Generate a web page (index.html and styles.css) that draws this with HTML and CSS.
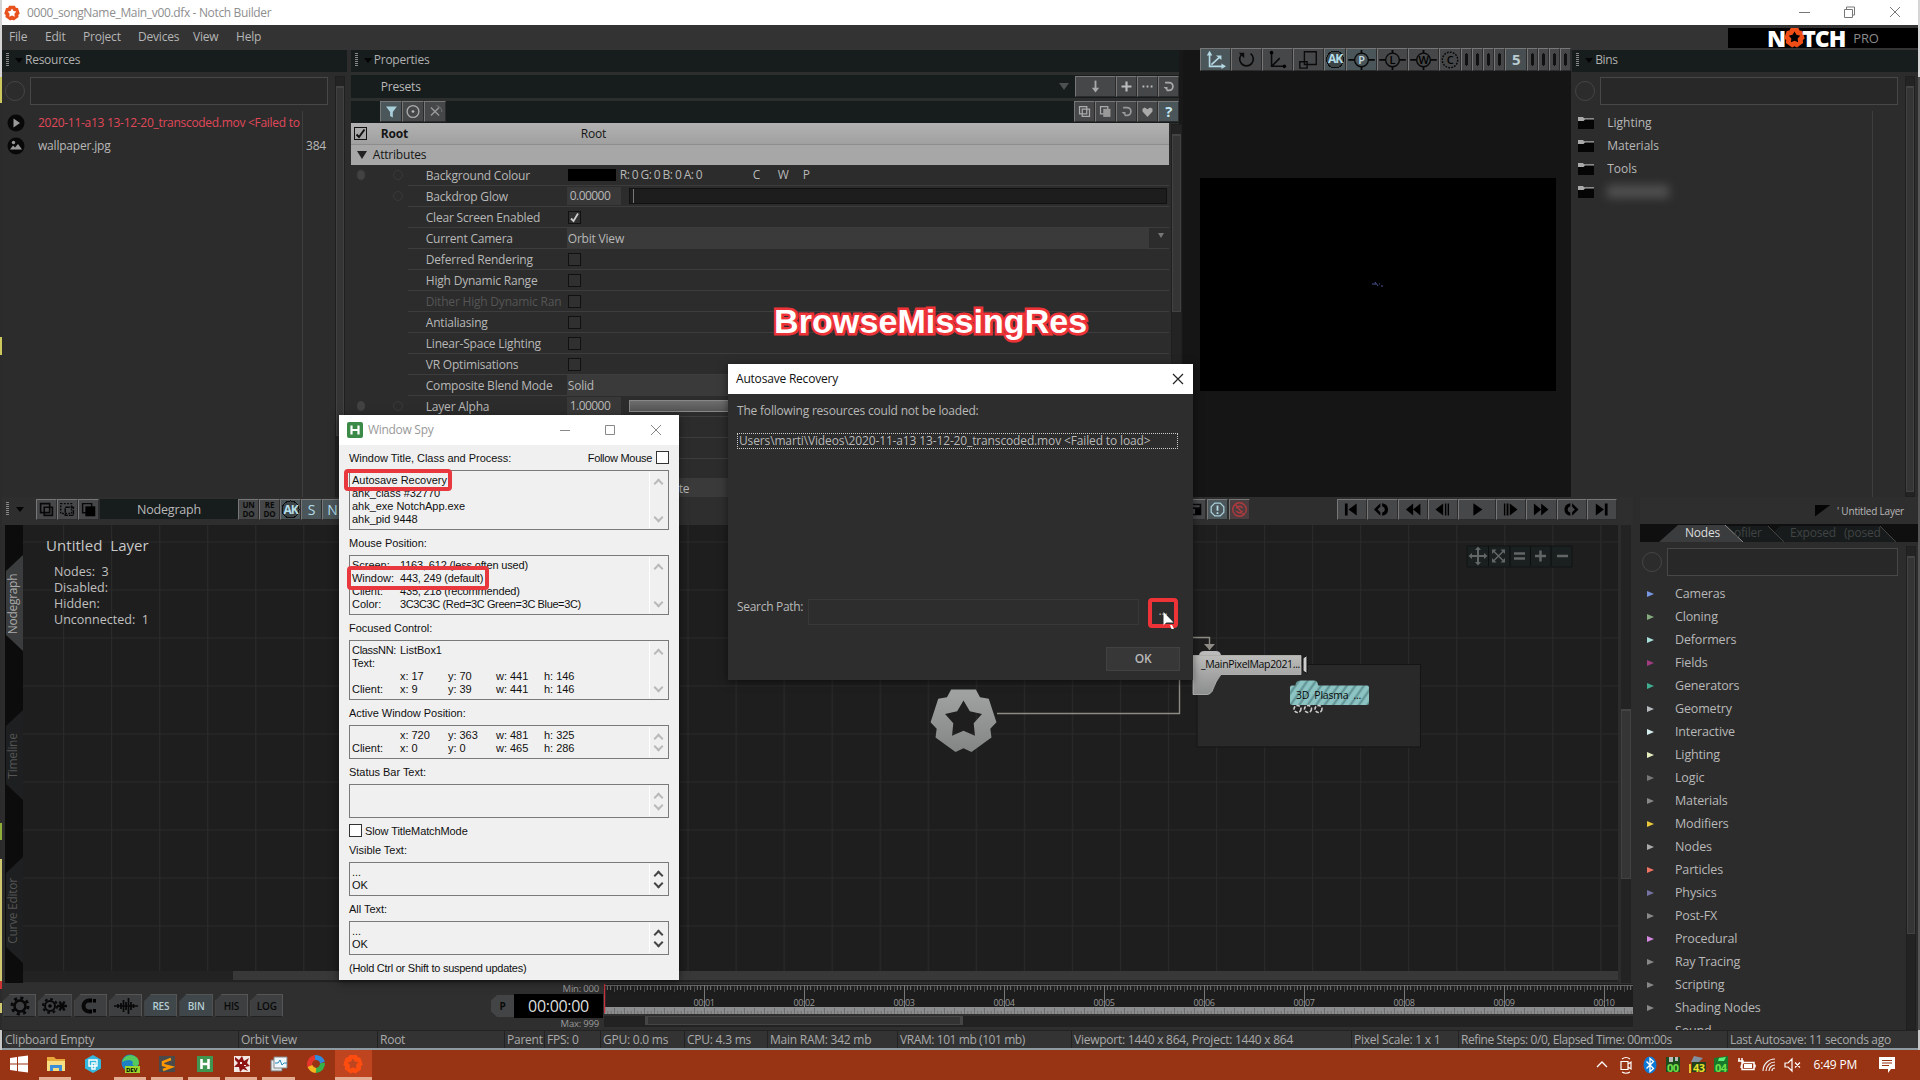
FILE: index.html
```html
<!DOCTYPE html>
<html lang="en">
<head>
<meta charset="utf-8">
<title>Notch Builder</title>
<link rel="stylesheet" href="styles.css">
</head>
<body>
<svg class="defs" width="0" height="0">
  <symbol id="star" viewBox="-35 -35 70 70"><path fill-rule="evenodd" d="M-12.7-31.5L12.7-31.5 17-23.5 26-21.9 33.9 2.4 27.6 9 28.8 18 8.2 33 0 29-8.2 33-28.8 18-27.6 9-33.9 2.4-26-21.9-17-23.5ZM0-20L-6.5-8.9-19-6.2-10.5 3.4-11.8 16.2 0 11 11.8 16.2 10.5 3.4 19-6.2 6.5-8.9Z"/></symbol>
  <symbol id="folder" viewBox="0 0 16 12"><path fill="#050505" d="M0 2h16v10H0z"/><path fill="#aaa" d="M0 0h5l1 1.2h10v1.2H7L5.500 4H0z"/></symbol>
  <symbol id="tri" viewBox="0 0 7 6"><path d="M0 0L7 3 0 6z"/></symbol>
  <symbol id="reload" viewBox="0 0 12 12"><path fill="none" stroke="currentColor" stroke-width="1.800" d="M2.500 2h4a4 4 0 1 1 0 8H4"/><path fill="currentColor" d="M1 6.500h4v4z"/></symbol>
</svg>

<div class="app">
  <header class="titlebar">
    <svg class="appicon" width="16" height="16" fill="#e8501c"><use href="#star"/></svg>
    <span class="apptitle">0000_songName_Main_v00.dfx - Notch Builder</span>
    <svg class="winbtns" width="112" height="24" fill="none" stroke="#777"><path d="M4 11.500h11M49.500 8.500h8v8h-8zM51.500 8v-2h8v8h-2M95 6l10 10M105 6L95 16"/></svg>
  </header>
  <nav class="menubar">
    <span class="m1">File</span><span class="m2">Edit</span><span class="m3">Project</span><span class="m4">Devices</span><span class="m5">View</span><span>Help</span>
    <div class="brand"><b>N</b><svg width="21" height="21" fill="#f04e16"><use href="#star"/></svg><b class="tch">TCH</b><i>PRO</i></div>
  </nav>

  <main class="top">
    <section class="resources">
      <h2 class="phead"><i class="grip"></i><i class="down"></i>Resources</h2>
      <div class="pbody">
        <div class="col">
          <div class="search"><i class="lens"></i><div class="field"></div></div>
          <div class="reslist">
            <div class="resnames">
              <div class="res fail"><svg width="18" height="18"><circle cx="9" cy="9" r="8.500" fill="#080808"/><path d="M6.500 4.500L13 9l-6.500 4.500z" fill="#999"/></svg><span>2020-11-a13 13-12-20_transcoded.mov &lt;Failed to load&gt;</span></div>
              <div class="res"><svg width="18" height="18"><circle cx="9" cy="9" r="8.500" fill="#080808"/><circle cx="6.500" cy="5.500" r="1.700" fill="#999"/><path d="M3 12.500l3-4 2 2 3-3.500 4 5.500z" fill="#999"/></svg><span>wallpaper.jpg</span></div>
            </div>
            <div class="ressize">384</div>
          </div>
        </div>
        <div class="vscroll"><i></i></div>
      </div>
    </section>

    <section class="properties">
      <h2 class="phead"><i class="grip"></i><i class="down"></i>Properties</h2>
      <div class="prow presets"><span>Presets</span><i class="dd"></i>
        <div class="btns b1"><svg class="btn wide" viewBox="0 0 41 21"><path d="M20.500 4v10" stroke="#aaa" stroke-width="2"/><path d="M16.500 12h8l-4 5z" fill="#aaa"/></svg><svg class="btn" viewBox="0 0 21 21"><path d="M10.500 5v11M5 10.500h11" stroke="#bbb" stroke-width="2.400"/></svg><svg class="btn" viewBox="0 0 21 21"><path d="M5 10.500h11" stroke="#bbb" stroke-width="2" stroke-dasharray="2 2.500"/></svg><svg class="btn" viewBox="0 0 21 21" color="#aaa"><use href="#reload" x="4" y="4" width="13" height="13"/></svg></div>
      </div>
      <div class="prow filter">
        <div class="btns b2"><svg class="btn w22 on" viewBox="0 0 21 21"><path d="M5 5h12l-4.500 6v6l-3-1.500V11z" fill="#a9cfdb"/></svg><svg class="btn w22" viewBox="0 0 21 21"><circle cx="10.500" cy="10.500" r="6.500" fill="none" stroke="#aaa" stroke-width="1.500"/><circle cx="10.500" cy="10.500" r="1.500" fill="#bbb"/></svg><svg class="btn w22" viewBox="0 0 21 21"><path d="M6 6l9 9M15 6l-9 9" stroke="#999" stroke-width="1.600"/><path d="M12 4q6 1 6 7" fill="none" stroke="#777"/></svg></div>
        <div class="btns b1"><svg class="btn" viewBox="0 0 21 21" fill="none" stroke="#aaa" stroke-width="1.400"><path d="M5 5h8v8H5zM8 8h8v8H8z"/></svg><svg class="btn" viewBox="0 0 21 21"><path d="M5 5h8v8H5z" fill="none" stroke="#aaa" stroke-width="1.400"/><path d="M8 7.500h8v9H8z" fill="#999"/></svg><svg class="btn" viewBox="0 0 21 21" color="#999"><use href="#reload" x="4" y="4" width="13" height="13"/></svg><svg class="btn" viewBox="0 0 21 21"><path d="M10.500 16.500L5 10.500V7.500L7.500 6l3 2 3-2L16 7.500v3z" fill="#aaa"/></svg><span class="btn on q">?</span></div>
      </div>
      <div class="pbody">
        <div class="plist">
          <div class="bar root"><i class="ck dark"><svg width="11" height="11"><path d="M1.500 6.500L4 9 9.500 1.500" fill="none" stroke="#111" stroke-width="2"/></svg></i><b>Root</b><span>Root</span></div>
          <div class="bar attr"><i></i>Attributes</div>
          <div class="p"><div class="pi"><svg width="57" height="20"><g fill="none" stroke="#3a3a3a"><ellipse cx="10" cy="10" rx="4" ry="5" fill="#424242"/><circle cx="47" cy="10" r="4.500"/></g></svg></div><div class="pl">Background Colour</div><div class="pv"><i class="swatch"></i><span class="rgb">R: 0 G: 0 B: 0 A: 0</span><span class="cwp">C</span><span class="cwp">W</span><span>P</span></div></div>
          <div class="p"><div class="pi"><svg width="57" height="20"><circle cx="47" cy="10" r="4.500" fill="none" stroke="#3a3a3a"/></svg></div><div class="pl">Backdrop Glow</div><div class="pv"><span class="num">0.00000</span><i class="slider"></i></div></div>
          <div class="p"><div class="pi"></div><div class="pl">Clear Screen Enabled</div><div class="pv"><i class="ck"><svg width="11" height="11"><path d="M2 6.500L4.500 9 9 1.500" fill="none" stroke="#ccc" stroke-width="1.800"/></svg></i></div></div>
          <div class="p"><div class="pi"></div><div class="pl">Current Camera</div><div class="pv"><span class="combo">Orbit View</span><i class="cdd"></i></div></div>
          <div class="p"><div class="pi"></div><div class="pl">Deferred Rendering</div><div class="pv"><i class="ck"></i></div></div>
          <div class="p"><div class="pi"></div><div class="pl">High Dynamic Range</div><div class="pv"><i class="ck"></i></div></div>
          <div class="p"><div class="pi"></div><div class="pl off"><span>Dither High Dynamic Range</span></div><div class="pv"><i class="ck"></i></div></div>
          <div class="p"><div class="pi"></div><div class="pl">Antialiasing</div><div class="pv"><i class="ck"></i></div></div>
          <div class="p"><div class="pi"></div><div class="pl">Linear-Space Lighting</div><div class="pv"><i class="ck"></i></div></div>
          <div class="p"><div class="pi"></div><div class="pl">VR Optimisations</div><div class="pv"><i class="ck"></i></div></div>
          <div class="p"><div class="pi"></div><div class="pl">Composite Blend Mode</div><div class="pv"><span class="combo">Solid</span><i class="cdd"></i></div></div>
          <div class="p"><div class="pi"><svg width="57" height="20"><ellipse cx="10" cy="10" rx="4" ry="5" fill="#424242"/><circle cx="47" cy="10" r="4.500" fill="none" stroke="#3a3a3a"/></svg></div><div class="pl">Layer Alpha</div><div class="pv"><span class="num">1.00000</span><i class="slider full"></i></div></div>
          <div class="p"><div class="pi"></div><div class="pl"></div><div class="pv"></div></div>
          <div class="p"><div class="pi"></div><div class="pl"></div><div class="pv"></div></div>
          <div class="p"><div class="pi"></div><div class="pl"></div><div class="pv"></div></div>
          <div class="p last"><div class="pi"></div><div class="pl"></div><div class="pv"><span class="combo tail">te</span></div></div>
        </div>
        <div class="vscroll ps"><i></i></div>
      </div>
    </section>

    <section class="viewport">
      <div class="vtools">
        <svg class="btn w31 on" viewBox="0 0 31 23"><path d="M9 4v15h15M11 17l9-8" fill="none" stroke="#b4d9e4" stroke-width="1.800"/><path d="M6 7l3-5 3 5zM22 16l5 3-5 3zM16 7h6v5z" fill="#b4d9e4"/></svg>
        <svg class="btn w31" viewBox="0 0 31 23"><path d="M11 5a7.500 7.500 0 1 0 9 0" fill="none" stroke="#0a0a0a" stroke-width="1.800"/><path d="M7 4h6v6z" fill="#0a0a0a"/></svg>
        <svg class="btn w31" viewBox="0 0 31 23"><path d="M9 4v15h14M9 19l9-9" fill="none" stroke="#0a0a0a" stroke-width="1.700"/><circle cx="9" cy="4" r="2"/><circle cx="23" cy="19" r="2"/></svg>
        <svg class="btn w31" viewBox="0 0 31 23"><path d="M11 3h13v14H11zM6 14h8v7H6z" fill="none" stroke="#0a0a0a" stroke-width="1.500"/></svg>
        <span class="btn w22 on ak">AK</span>
        <svg class="btn w31 on" viewBox="0 0 31 23"><circle cx="15.500" cy="12" r="7.500" fill="none" stroke="#080808" stroke-width="1.500"/><path d="M1 12h7M23 12h7M15.500 1v4M15.500 19v4" stroke="#080808" stroke-width="2"/><text x="15.500" y="16.500" class="let" fill="#c4dde4">P</text></svg>
        <svg class="btn w31" viewBox="0 0 31 23"><circle cx="15.500" cy="12" r="7.500" fill="none" stroke="#080808" stroke-width="1.500"/><path d="M1 12h7M23 12h7M15.500 1v4M15.500 19v4" stroke="#080808" stroke-width="2"/><text x="15.500" y="16.500" class="let">L</text></svg>
        <svg class="btn w31" viewBox="0 0 31 23"><circle cx="15.500" cy="12" r="7.500" fill="none" stroke="#080808" stroke-width="1.500"/><path d="M1 12h7M23 12h7M15.500 1v4M15.500 19v4" stroke="#080808" stroke-width="2"/><text x="15.500" y="16.500" class="let">W</text></svg>
        <svg class="btn w22" viewBox="0 0 22 23"><circle cx="11" cy="12" r="8.500" fill="none" stroke="#080808" stroke-width="1.600" stroke-dasharray="2 1.300"/><text x="11" y="17" class="let">C</text></svg>
        <i class="btn w11"></i><i class="btn w11"></i><i class="btn w11"></i><i class="btn w11"></i><b class="btn w22 five">5</b><i class="btn w11"></i><i class="btn w11"></i><i class="btn w11"></i><i class="btn w11"></i>
      </div>
      <div class="scene"><svg width="12" height="8"><path d="M0 4h4M3 2l3 4M7 4h1M9 6h2" stroke="#5560a8" stroke-width=".9"/></svg></div>
    </section>

    <section class="bins">
      <h2 class="phead"><i class="grip"></i><i class="down"></i>Bins</h2>
      <div class="pbody">
        <div class="col">
          <div class="search"><i class="lens"></i><div class="field"></div></div>
          <div class="binlist">
            <div><svg width="16" height="12"><use href="#folder"/></svg>Lighting</div>
            <div><svg width="16" height="12"><use href="#folder"/></svg>Materials</div>
            <div><svg width="16" height="12"><use href="#folder"/></svg>Tools</div>
            <div><svg width="16" height="12"><use href="#folder"/></svg><i class="redact"></i></div>
          </div>
        </div>
        <div class="vscroll"><i></i></div>
      </div>
    </section>
  </main>

  <div class="bottom">
    <section class="work">
      <div class="ngbar">
        <i class="grip"></i><i class="down"></i>
        <svg class="btn" viewBox="0 0 21 21" fill="none" stroke="#080808" stroke-width="1.800"><path d="M4 4h10v10H4zM8 8h9v9H8z"/></svg><svg class="btn" viewBox="0 0 21 21" fill="none" stroke="#080808" stroke-width="1.600"><path stroke-dasharray="2 1.500" d="M3 4h12v11H3z"/><path d="M8 8h9v9H8z" stroke-dasharray="5 1"/></svg><svg class="btn" viewBox="0 0 21 21"><path d="M4 4h10v10H4z" fill="none" stroke="#080808" stroke-width="1.600"/><path d="M7 7h11v11H7z"/></svg>
        <span class="nglabel">Nodegraph</span>
        <span class="btn undo">UN<br>DO</span><span class="btn undo">RE<br>DO</span><span class="btn on ak">AK</span><span class="btn on sn">S</span><span class="btn on sn">N</span>
        <div class="ngright">
          <svg class="btn" viewBox="0 0 21 21"><path d="M3 5h13v11H3zM3 9h13" fill="none" stroke="#080808" stroke-width="1.800"/><path d="M10 10h6v6h-6z"/></svg><svg class="btn on" viewBox="0 0 21 21"><path d="M7.500 3.500h6l4 4v6l-4 4h-6l-4-4v-6z" fill="none" stroke="#a9cfdb" stroke-width="1.400"/><path d="M10.500 6v6M10.500 13.500v2" stroke="#b4d9e4" stroke-width="2"/></svg><svg class="btn red" viewBox="0 0 21 21"><circle cx="10.500" cy="10.500" r="7.500" fill="none" stroke="#b03a3f" stroke-width="1.500"/><path d="M7 9a4 4 0 0 1 7 0M14 12a4 4 0 0 1-7 0M6 5l9 11" fill="none" stroke="#b03a3f" stroke-width="1.500"/></svg>
        </div>
        <div class="transport">
          <svg class="btn w30" viewBox="0 0 30 21"><path d="M7 4h3v13H7zM20 4v13l-9-6.500z"/></svg><svg class="btn w30" viewBox="0 0 30 21"><path d="M13 3.500l-7 7 7 7v-4l-3-3 3-3zM15 3.500q6.500 1 6.500 7t-6.500 7v-3.500q3-1 3-3.500t-3-3.500z"/></svg><svg class="btn w30" viewBox="0 0 30 21"><path d="M15 4v13l-8-6.500zM23 4v13l-8-6.500z"/></svg><svg class="btn w30" viewBox="0 0 30 21"><path d="M15 4v13l-8.500-6.500zM17 4h1.500v13H17zM20 4h1.500v13H20z"/></svg><svg class="btn w38" viewBox="0 0 38 21"><path d="M15 3.500v14l10-7z"/></svg><svg class="btn w30" viewBox="0 0 30 21"><path d="M7 4h1.500v13H7zM10 4h2v13h-2zM13.500 4v13l8.500-6.500z"/></svg><svg class="btn w30" viewBox="0 0 30 21"><path d="M7 4v13l8-6.500zM15 4v13l8-6.500z"/></svg><svg class="btn w30" viewBox="0 0 30 21"><path d="M15 3.500l7 7-7 7v-4l3-3-3-3zM13 3.500q-6.500 1-6.500 7t6.500 7v-3.500q-3-1-3-3.500t3-3.500z"/></svg><svg class="btn w30" viewBox="0 0 30 21"><path d="M18 4h3v13h-3zM8 4v13l9-6.500z"/></svg>
        </div>
      </div>
      <div class="stage">
        <svg class="tabs" width="20" height="458">
          <path d="M0 0h18v458H0z" fill="#0c0c0c"/>
          <path d="M18 30L1 46v64l17 16z" fill="#3a3c3d"/>
          <path d="M18 185L1 201v58l17 16zM18 332L1 348v74l17 16z" fill="#1d1f20"/>
          <g transform="rotate(-90)"><text x="-79" y="12" fill="#aaa">Nodegraph</text><text x="-231" y="12" fill="#555">Timeline</text><text x="-386" y="12" fill="#555">Curve Editor</text></g>
        </svg>
        <div class="graphcol">
          <svg class="graph" width="1595" height="446" viewBox="23 525 1595 446">
            <defs>
              <pattern id="grid" x="63" y="541.500" width="48.040" height="48" patternUnits="userSpaceOnUse"><path d="M.5 0v48M0 .5h48.040" stroke="#2a2a2a" stroke-width="1.200" fill="none"/></pattern>
              <pattern id="hatch" width="7" height="7" patternUnits="userSpaceOnUse" patternTransform="rotate(35)"><path d="M0 0h7v7H0z" fill="#8cc3c3"/><path d="M5.500 0v7" stroke="#5d8f90" stroke-width="2"/></pattern>
              <linearGradient id="metal" x2="0" y2="1"><stop offset="0" stop-color="#bcbcba"/><stop offset="1" stop-color="#8c8e8e"/></linearGradient>
              <linearGradient id="iron" x2="0" y2="1"><stop offset="0" stop-color="#a2a4a4"/><stop offset="1" stop-color="#848686"/></linearGradient>
            </defs>
            <path d="M23 525h1595v446H23z" fill="#1e1e1e"/><path d="M23 525h1595v446H23z" fill="url(#grid)"/>
            <text x="46" y="551" class="g1">Untitled&#160; Layer</text>
            <g class="g2"><text x="54" y="576">Nodes:&#160; 3</text><text x="54" y="592">Disabled:</text><text x="54" y="608">Hidden:</text><text x="54" y="624">Unconnected:&#160; 1</text></g>
            <path d="M1197 664.500h223.500v82.500H1197z" fill="#292929" stroke="#141414"/>
            <path d="M997 713.500h182.500V670M1180 637.500h29.500V650" fill="none" stroke="#8d8b83" stroke-width="1.400"/>
            <path d="M1204 644l5.500 6 5.500-6z" fill="#8d8b83"/>
            <svg x="929.500" y="686" width="68" height="68" fill="url(#iron)"><use href="#star"/></svg>
            <path d="M1199 655q1-4 5-4h12q4 0 5 4z" fill="#bbb"/>
            <path d="M1193 655.500h108v19h-80q-5 6-9 17-2 3-5 3h-14z" fill="url(#metal)" stroke="#c8c8c6" stroke-width=".7"/>
            <path d="M1303 658l4-2.500v18l-4-2.500z" fill="#ccc" stroke="#111"/>
            <path d="M1295 687l1-4q1-2.500 4-2.500h14q3 0 3.500 2.500l1 4z" fill="url(#hatch)"/>
            <rect x="1290" y="685.500" width="79" height="19.500" rx="2" fill="url(#hatch)"/>
            <text x="1201" y="668" class="n1">_MainPixelMap2021...</text>
            <text x="1296" y="698.500" class="n2">3D&#160; Plasma&#160; ...</text>
            <g fill="#222" stroke="#ccc" stroke-width="1.600" stroke-dasharray="3.500 1.500"><circle cx="1297.500" cy="709" r="3.500"/><circle cx="1308" cy="709" r="3.500"/><circle cx="1318.500" cy="709" r="3.500"/></g>
            <path d="M1467 546h105v21h-105z" fill="#1a1f1f" stroke="#101414"/>
            <path d="M1488.500 546v20M1510 546v20M1530.500 546v20M1551 546v20" stroke="#0d0f0f" fill="none"/>
            <g stroke="#626666" fill="none" stroke-width="2"><path d="M1470 556h16M1478 548v16" /><path d="M1493 550.500l11 11M1504 550.500l-11 11" stroke-width="1.500"/><path d="M1514 553.500h11M1514 558.500h11M1535 556h11M1540.500 550.500v11M1557 556h11" stroke-width="2.500"/></g>
            <path fill="#626666" d="M1475 550h6l-3-3.500zM1475 562h6l-3 3.500zM1472 553v6l-3.500-3zM1484 553v6l3.500-3zM1492 549.500h4.500l-4.500 4.500zM1505 549.500h-4.500l4.500 4.500zM1492 562.500h4.500l-4.500-4.500zM1505 562.500h-4.500l4.500-4.500z"/>
          </svg>
          <div class="hscroll"><i></i></div>
        </div>
        <div class="vscroll gs"><i></i></div>
      </div>
      <div class="timebar">
        <div class="tools">
          <span><svg width="20" height="20"><circle cx="10" cy="10" r="5.500" fill="none" stroke="#080808" stroke-width="2.500"/><circle cx="10" cy="10" r="8" fill="none" stroke="#080808" stroke-width="3" stroke-dasharray="3.100 3.180"/></svg></span>
          <span><svg width="26" height="18"><circle cx="8" cy="9" r="5" fill="none" stroke="#080808" stroke-width="2"/><circle cx="8" cy="9" r="7" fill="none" stroke="#080808" stroke-width="2" stroke-dasharray="2.700 2.800"/><circle cx="8" cy="9" r="1.800"/><path d="M15 9h10M17.500 4.500l5 9M22.500 4.500l-5 9" stroke="#080808" stroke-width="2.500"/></svg></span>
          <span><svg width="20" height="18"><path d="M9 3.500a5.500 5.500 0 0 0 0 11" fill="none" stroke="#080808" stroke-width="4"/><path d="M9 1.500h3v4H9zM9 12.500h3v4H9zM13 2h3v3.500h-3zM13 12h3v3.500h-3z"/></svg></span>
          <span><svg width="26" height="18"><path d="M1 9h24M5 7v4M8 6v6M10.500 3v12M13 5v8M15.500 1v16M18 5v8M20.500 7v4" stroke="#080808" stroke-width="1.700"/></svg></span>
          <span class="lit">RES</span><span class="lit">BIN</span><span>HIS</span><span>LOG</span>
        </div>
        <div class="clock"><span>Min: 000</span><div><b>P</b><em>00:00:00</em></div><span>Max: 999</span></div>
        <div class="tl">
          <svg width="1029" height="32" viewBox="604 984 1029 32">
            <defs><pattern id="tk" x="604" y="985" width="10" height="8" patternUnits="userSpaceOnUse"><path d="M0 0v7M3.330 0v5M6.660 0v5" stroke="#777"/></pattern><pattern id="tk2" x="604" y="1007" width="10" height="7" patternUnits="userSpaceOnUse"><path d="M.5 1v6M3.800 4v3M7.200 4v3" stroke="#6d6d6d"/></pattern></defs>
            <path d="M604 984h1030v23H604z" fill="#1d1d1d"/><path d="M604 985h1030v8H604z" fill="url(#tk)"/><path d="M604 985.500h1030" stroke="#666"/>
            <path d="M704.500 985v22M804.500 985v22M904.500 985v22M1004.500 985v22M1104.500 985v22M1204.500 985v22M1304.500 985v22M1404.500 985v22M1504.500 985v22M1604.500 985v22" stroke="#777"/>
            <path d="M604 1007h1030v7H604z" fill="#8b8d8e"/><path d="M604 1007h1030v7H604z" fill="url(#tk2)"/>
            <g class="tlt"><text x="704">00:01</text><text x="804">00:02</text><text x="904">00:03</text><text x="1004">00:04</text><text x="1104">00:05</text><text x="1204">00:06</text><text x="1304">00:07</text><text x="1404">00:08</text><text x="1504">00:09</text><text x="1604">00:10</text></g>
            <path d="M604.500 984v29" stroke="#c8323e" stroke-width="1.500"/>
          </svg>
          <div class="tscroll"><i></i></div>
        </div>
      </div>
    </section>
    <section class="nodes">
      <div class="layer"><i></i>' Untitled Layer</div>
      <svg class="ntabs" width="278" height="18"><path d="M0 0h278v18H0z" fill="#0f0f0f"/><path d="M68 2h60l18 16H68zM140 2h100l16 16H124z" fill="#181b1b"/><path d="M128 2l16 16M240 2l16 16" stroke="#444" fill="none"/><path d="M19 18L38 1h47l18 17z" fill="#3a3c3d"/><path d="M85 1l18 17" stroke="#888"/><text x="45" y="13" fill="#ddd">Nodes</text><text x="94" y="13" fill="#3f4444">ofiler</text><text x="150" y="13" fill="#3f4444">Exposed</text><text x="204" y="13" fill="#3f4444">(posed</text></svg>
      <div class="pbody">
        <div class="col">
          <div class="search"><i class="lens"></i><div class="field"></div></div>
          <ul>
            <li><svg fill="#7795e0"><use href="#tri"/></svg>Cameras</li><li><svg fill="#85aa7e"><use href="#tri"/></svg>Cloning</li><li><svg fill="#a5dcd8"><use href="#tri"/></svg>Deformers</li><li><svg fill="#a03c80"><use href="#tri"/></svg>Fields</li><li><svg fill="#3fae90"><use href="#tri"/></svg>Generators</li><li><svg fill="#b5b9be"><use href="#tri"/></svg>Geometry</li><li><svg fill="#d5eeee"><use href="#tri"/></svg>Interactive</li><li><svg fill="#e8eec0"><use href="#tri"/></svg>Lighting</li><li><svg fill="#777"><use href="#tri"/></svg>Logic</li><li><svg fill="#888"><use href="#tri"/></svg>Materials</li><li><svg fill="#e8c63a"><use href="#tri"/></svg>Modifiers</li><li><svg fill="#aaa"><use href="#tri"/></svg>Nodes</li><li><svg fill="#ee7362"><use href="#tri"/></svg>Particles</li><li><svg fill="#7472a0"><use href="#tri"/></svg>Physics</li><li><svg fill="#888"><use href="#tri"/></svg>Post-FX</li><li><svg fill="#d488e0"><use href="#tri"/></svg>Procedural</li><li><svg fill="#888"><use href="#tri"/></svg>Ray Tracing</li><li><svg fill="#888"><use href="#tri"/></svg>Scripting</li><li><svg fill="#888"><use href="#tri"/></svg>Shading Nodes</li><li>Sound</li>
          </ul>
        </div>
        <div class="vscroll"><i></i></div>
      </div>
    </section>
  </div>

  <footer class="status"><span class="s1">Clipboard Empty</span><span class="s2">Orbit View</span><span class="s3">Root</span><span class="s4">Parent</span><span class="s5">FPS: 0</span><span class="s6">GPU: 0.0 ms</span><span class="s7">CPU: 4.3 ms</span><span class="s8">Main RAM: 342 mb</span><span class="s9">VRAM: 101 mb (101 mb)</span><span class="s10">Viewport: 1440 x 864, Project: 1440 x 864</span><span class="s11">Pixel Scale: 1 x 1</span><span class="s12">Refine Steps: 0/0, Elapsed Time: 00m:00s</span><span class="s13">Last Autosave: 11 seconds ago</span></footer>
</div>

<footer class="taskbar">
  <span class="t"><svg width="20" height="20"><path fill="#fff" d="M1 4l7-1v6.500H1zM9 2.800L19 1.500v8H9zM1 10.500h7V17l-7-1zM9 10.500h10v8L9 17.200z"/></svg></span>
  <span class="t open"><svg width="20" height="20"><path fill="#e8a93a" d="M1 3h7l2 2h9v12H1z"/><path fill="#f9dd83" d="M1 7h18v10H1z"/><path fill="#3d8fd8" d="M4 11h12v6h-3v-3H7v3H4z"/></svg></span>
  <span class="t"><svg width="20" height="20"><path fill="#35b7dd" d="M10 1l8 4.500v9L10 19l-8-4.500v-9z"/><path fill="none" stroke="#fff" stroke-width="1.400" d="M6 6h8v6H6zM9 9h3v6H9z"/></svg></span>
  <span class="t open"><svg width="20" height="20"><circle cx="10" cy="9" r="8.500" fill="#1d7fc4"/><path d="M2 8q2-7 9-7 8 1 8 8 0 3-4 3-4-1-2-4-3-4-11 0z" fill="#55c95e"/><rect x="5" y="12" width="15" height="7" fill="#9bd52c"/><text x="6" y="18" font-size="6" font-weight="700">DEV</text></svg></span>
  <span class="t open"><svg width="20" height="20"><path fill="#4a4a4a" d="M2 2h16v16H2z"/><path d="M14 5L6 8v3l8 2-8 3" fill="none" stroke="#ff9800" stroke-width="2.500"/></svg></span>
  <span class="t open"><svg width="20" height="20"><path fill="#3f9650" d="M2 2h16v16H2z"/><path d="M6.500 5v10M13.500 5v10M6 10h8" stroke="#fff" stroke-width="2.600"/></svg></span>
  <span class="t open"><svg width="20" height="20"><path fill="#f2e9e4" d="M2 2h16v16H2z"/><path d="M3 3l4 3 3-4 2 5 5-3-2 5 3 3-5 1 3 4-5-2-3 3-1-5-5 0 4-4-3-3z" fill="#8e1414"/><path d="M8 8h2v2H8zM12 11h2v1h-2z" fill="#f2e9e4"/></svg></span>
  <span class="t open"><svg width="20" height="20"><path fill="#dfe7ea" stroke="#777" d="M2 6h11v11H2z"/><path fill="#eef7fb" stroke="#888" d="M5 3h13v11H5z"/><path d="M6 9h3l2-3 2 5 2-2h3" fill="none" stroke="#2a86b8"/></svg></span>
  <span class="t"><svg width="20" height="20"><g fill="none" stroke-width="5"><path d="M4 13A7 7 0 0 1 9 3.500" stroke="#e5352c"/><path d="M9 3.500a7 7 0 0 1 7.500 5" stroke="#2f8be0"/><path d="M16.500 9A7 7 0 0 1 10 16.500" stroke="#35b34a"/><path d="M10 16.500A7 7 0 0 1 4 12" stroke="#f5b51e"/></g></svg></span>
  <span class="t active"><svg width="20" height="20" fill="#ff4d10"><use href="#star"/></svg></span>
  <div class="tray">
    <svg width="24" height="22"><path d="M7 13l5-5 5 5" fill="none" stroke="#fff" stroke-width="1.300"/></svg>
    <svg width="24" height="22"><path d="M7 7.500h7v8H7zM14 10l3-2v7l-3-2M8 5q4-3 8 0M8 18q4 2.500 8 0" fill="none" stroke="#fff" stroke-width="1.200"/></svg>
    <svg width="24" height="22"><ellipse cx="12" cy="11" rx="6.500" ry="8.500" fill="#0a78d6"/><path d="M8.500 7.500l7 7L12 17.500V4.500l3.500 3-7 7" fill="none" stroke="#fff" stroke-width="1.300"/></svg>
    <svg width="24" height="22"><path d="M4 3h14v15H4z" fill="#1d4d1d"/><path d="M7 3h4v5H7zM13 3h3v4h-3z" fill="#bbb"/><text x="5" y="18" fill="#6fe04a">00</text></svg>
    <svg width="24" height="22"><path d="M8 2l9 2-5 5-7-1z" fill="#8090a0"/><path d="M6 8h14v10H6z" fill="#23401c"/><path d="M3 10h2v9H3z" fill="#e8c62a"/><text x="7" y="18" fill="#e8e02a">43</text></svg>
    <svg width="24" height="22"><path d="M4 4l14-2v16H4z" fill="#177a2a"/><path d="M9 4l7-1-2 4H8z" fill="#5bf07a"/><text x="5" y="18" fill="#6fe04a">04</text></svg>
    <svg width="24" height="22"><path d="M8 8.500h12v7H8zM21 10.500v3M5 4v3M8 4v3M4 7h5v2q-2 2-2 5" fill="none" stroke="#fff" stroke-width="1.500"/><path d="M10 10h8v4h-8z" fill="#fff"/></svg>
    <svg width="24" height="22"><path d="M5 17A12 12 0 0 1 17 5M8 17a9 9 0 0 1 9-9M11 17a6 6 0 0 1 6-6M14 17a3 3 0 0 1 3-3" fill="none" stroke="#eee" stroke-width="1.200"/></svg>
    <svg width="22" height="22"><path d="M3 9h3l4-4v12l-4-4H3zM13 8.500l5 5M18 8.500l-5 5" fill="none" stroke="#fff" stroke-width="1.200"/></svg>
    <span>6:49 PM</span>
    <svg class="notif" width="18" height="18"><path d="M1 1h16v12h-4l-3 4v-4H1z" fill="#fff"/><path d="M4 4.500h10M4 7h10M4 9.500h7" stroke="#983313"/></svg>
  </div>
</footer>

<h1 class="caption">BrowseMissingRes</h1>

<div class="dialog">
  <div class="dtitle">Autosave Recovery<svg width="12" height="12"><path d="M1 1l10 10M11 1L1 11" stroke="#222" stroke-width="1.200"/></svg></div>
  <div class="dbody">
    <p>The following resources could not be loaded:</p>
    <div class="item">Users\marti\Videos\2020-11-a13 13-12-20_transcoded.mov &lt;Failed to load&gt;</div>
    <div class="path"><span>Search Path:</span><div class="dfield"></div><div class="browse">...</div></div>
    <div class="ok">OK</div>
  </div>
</div>
<svg class="cursor" width="14" height="18"><path d="M.5 0v13l3-2.500h7z" fill="#fff"/><path d="M7 13l1.500 4H11L9 13z" fill="#fff"/></svg>

<div class="spy">
  <div class="stitle"><svg width="16" height="16"><rect width="16" height="16" rx="2" fill="#3b8a48"/><path d="M4.500 3.500v9M11.500 3.500v9M4 8h8" stroke="#fff" stroke-width="2.200"/></svg><span>Window Spy</span><svg class="sb" width="104" height="12" fill="none" stroke="#888"><path d="M1 6.500h10M46.500 1.500h9v9h-9zM92 1l10 10M102 1L92 11"/></svg></div>
  <div class="sbody">
    <div class="lab first">Window Title, Class and Process:<span>Follow Mouse<i></i></span></div>
    <div class="box h60"><p>Autosave Recovery</p><p>ahk_class #32770</p><p>ahk_exe NotchApp.exe</p><p>ahk_pid 9448</p><i class="arr"></i></div>
    <div class="lab">Mouse Position:</div>
    <div class="box h60 tight"><p><u>Screen:</u>1163, 612 (less often used)</p><p><u>Window:</u>443, 249 (default)</p><p><u>Client:</u>435, 218 (recommended)</p><p class="tighter"><u>Color:</u>3C3C3C (Red=3C Green=3C Blue=3C)</p><i class="arr"></i></div>
    <div class="lab">Focused Control:</div>
    <div class="box h60"><p><u class="cn">ClassNN:</u>ListBox1</p><p>Text:</p><p><u></u><u>x: 17</u><u>y: 70</u><u>w: 441</u><u>h: 146</u></p><p><u>Client:</u><u>x: 9</u><u>y: 39</u><u>w: 441</u><u>h: 146</u></p><i class="arr"></i></div>
    <div class="lab">Active Window Position:</div>
    <div class="box h34"><p><u></u><u>x: 720</u><u>y: 363</u><u>w: 481</u><u>h: 325</u></p><p><u>Client:</u><u>x: 0</u><u>y: 0</u><u>w: 465</u><u>h: 286</u></p><i class="arr"></i></div>
    <div class="lab">Status Bar Text:</div>
    <div class="box h34"><i class="arr"></i></div>
    <div class="slow"><i></i>Slow TitleMatchMode</div>
    <div class="lab vis">Visible Text:</div>
    <div class="box h34"><p>...</p><p>OK</p><i class="arr dk"></i></div>
    <div class="lab">All Text:</div>
    <div class="box h34"><p>...</p><p>OK</p><i class="arr dk"></i></div>
    <div class="lab hold">(Hold Ctrl or Shift to suspend updates)</div>
  </div>
  <i class="mark k1"></i><i class="mark k2"></i>
</div>
</body>
</html>
```

FILE: styles.css
```css
*{box-sizing:border-box;margin:0;padding:0}
html,body{width:1920px;height:1080px;overflow:hidden}
body{position:relative;font:12px/16px "Open Sans","Noto Sans",sans-serif;letter-spacing:-.2px;color:#b8b8b8;padding:0 2px;white-space:nowrap;
  background:linear-gradient(#d5d5d5 77px,#cdc85e 77px 103px,#2b2b2b 103px 337px,#cdc85e 337px 355px,#2b2b2b 355px 823px,#8faf3a 823px 840px,#2b2b2b 840px 859px,#d0c870 859px 981px,#c33 981px 989px,#2b2b2b 989px 1003px,#d0c870 1003px 1013px,#2b2b2b 1013px 1030px,#c8c8c8 1030px) 0 0/2px 100% no-repeat,linear-gradient(#d5d5d5 77px,#555 77px 1030px,#c8c8c8 1030px)}
i,em{font-style:normal}
svg{display:block;flex:none}
.defs{position:absolute}
.app{height:1050px;display:flex;flex-direction:column;background:#2c2c2c;border-bottom:2px solid #8f9ba3}
.titlebar{height:25px;flex:none;background:#fff;display:flex;align-items:center;padding:0 11px 0 2px;color:#8e8e8e}
.appicon{margin-right:7px}
.apptitle{flex:1;letter-spacing:-.35px}
.menubar{height:25px;flex:none;background:#333;display:flex;align-items:center;padding-left:7px;color:#b5b5b5}
.menubar>span{padding-bottom:2px}
.m1{width:36px}.m2{width:38px}.m3{width:55px}.m4{width:55px}.m5{width:43px}
.brand{margin-left:auto;width:190px;height:20px;background:#000;display:flex;align-items:center;padding-left:39px;color:#fff;font-size:23px;line-height:20px;letter-spacing:-1px}
.brand b{font-weight:800}.brand svg{margin:0 -3px 0 -1px}.brand i{font-size:13px;color:#8b8b8b;margin-left:8px;letter-spacing:-.2px}
.top{height:447px;flex:none;display:flex}
.phead{height:22px;flex:none;background:#171c1d;display:flex;align-items:center;padding:0 0 2px 4px;font-size:12px;font-weight:400;color:#b0b0b0;line-height:18px;letter-spacing:-.25px}
.grip{width:3px;height:14px;background:repeating-linear-gradient(#888 0 1px,transparent 1px 2px);margin-right:6px}
.down{border:4px solid transparent;border-top:5px solid #050505;border-bottom:0;margin-right:2px}
.resources{width:345px;margin-right:4px;display:flex;flex-direction:column}
.pbody{flex:1;display:flex;min-height:0}
.col{flex:1;display:flex;flex-direction:column;min-height:0;overflow:hidden;min-width:0}
.search{height:28px;flex:none;display:flex;align-items:center;margin:5px 0 6px 3px}
.lens{width:20px;height:20px;border:1px solid #454545;border-radius:50%;margin-right:5px}
.field{flex:1;height:28px;border:1px solid #474747;background:#282828}
.resources .col{padding-right:9px}
.resources .search{margin-right:0}
.vscroll{width:10px;background:#232323;border:1px solid #1f1f1f;margin-top:4px}
.resources .vscroll{margin-right:2px}
.vscroll i{display:block;background:#353535;border:1px solid #424242;border-top:2px solid #444;height:97%;margin-top:9px}
.resources .vscroll i{height:350px}
.resources .col{padding-right:7px}
.reslist{flex:1;display:flex;overflow:hidden}
.resnames{width:301px;border-right:1px solid #3e3e3e;overflow:hidden}
.res{height:23px;display:flex;align-items:center;padding-left:5px}
.res svg{margin-right:13px}
.fail{color:#e0485a;letter-spacing:-.29px}
.ressize{padding:27px 0 0 3px}
.properties{width:833px;background:#2c2c2c;border-right:4px solid #181818;display:flex;flex-direction:column}
.prow{height:26px;flex:none;display:flex;align-items:center;background:#171c1d;border-top:3px solid #2d2f2f;padding-left:30px}
.prow.filter{height:25px;align-items:flex-start}
.presets span{flex:1}
.dd{border:5px solid transparent;border-top:7px solid #4c5050;border-bottom:0;margin-right:6px}
.btns{display:flex}.b1{margin-left:auto}
.filter .b2{margin-right:auto;margin-left:-1px}
.btn{width:21px;height:21px;flex:none;background:#454748;border:1px solid;border-color:#777 #2c2c2c #2c2c2c #777}
.btn.on{background:#4b565a}
.btn.wide{width:41px}.w22.btn{width:22px}.w31{width:31px!important}.w30{width:30px!important}.w38{width:38px!important}.w11{width:11px!important}
.q{color:#c4e6f0;font:700 15px/19px "Open Sans",sans-serif;text-align:center}
.plist{flex:1;overflow:hidden}
.bar{height:21px;background:linear-gradient(#b2b2b2,#a0a0a0);color:#151515;display:flex;align-items:center}
.bar b{width:200px}
.attr{background:#a7a7a7;border-top:1px solid #8d8d8d}
.attr i{border:5px solid transparent;border-top:8px solid #222;border-bottom:0;margin:0 6px 0 6px}
.ck{width:13px;height:13px;border:1.500px solid #111;background:#303030;display:block;margin-left:1px}
.ck.dark{background:none;margin:0 14px 0 3px}
.p{height:21px;display:flex}
.p.last{margin-top:-2px}
.pi{width:57px}
.pl{width:159px;padding-left:18px;line-height:21px;border-bottom:1px solid #3d3d3d;overflow:hidden;background:radial-gradient(ellipse at 6px 10px,#3a3a3a 0 2px,#343434 2px 5px,transparent 5px)}
.off{color:#555}
.off span{display:block;width:135px;overflow:hidden}
.pv{flex:1;border-bottom:1px solid #3d3d3d;display:flex;align-items:center}
.swatch{width:48px;height:12px;background:#000;margin:0 4px 0 1px}
.rgb{width:133px;letter-spacing:-.5px;word-spacing:-.2px}.cwp{width:25px}
.num{width:54px;height:18px;line-height:18px;padding-left:3px;background:#383838;letter-spacing:-.55px}
.slider{flex:1;height:16px;margin:0 2px 0 8px;background:#1d1d1d;border:1px solid #111;box-shadow:inset 3px 0 #1d1d1d,inset 4px 0 #777}
.full{height:12px;background:linear-gradient(#6d6d6d,#555);box-shadow:none;border-color:#888}
.combo{flex:1;height:21px;line-height:21px;background:#3a3a3a;padding-left:1px}
.combo.tail{padding-left:112px}
.cdd{width:20px;height:20px;display:block;position:relative}
.cdd::after{content:"";position:absolute;left:9px;top:5px;border:3px solid transparent;border-top:5px solid #777;border-bottom:0}
.ps{margin:1px 0 0 2px;}
.ps i{height:178px}
.properties .vscroll{width:11px;margin-right:-3px}
.properties .plist{flex:0 0 818px}
.viewport{width:388px;background:#151515;padding-left:14px}
.vtools{display:flex;margin:-2px 0 0 3px;height:23px}
.vtools .btn{height:23px;width:31px}
.vtools .w22.btn{width:22px}
.ak{color:#b4dde8;font:700 12px/20px "Open Sans",sans-serif;letter-spacing:-1px;text-align:center;background:radial-gradient(circle,#3c4446 8px,#101010 8px 9px,#4b565a 9px)!important}
i.w11{background:radial-gradient(ellipse 2px 7px,#111 90%,#454748)}
.five{color:#b8ccd2;font-size:15px;line-height:21px;text-align:center;background:#474f52}
.let{font:600 12px "Open Sans",sans-serif;text-anchor:middle}
.scene{width:356px;height:213px;background:#000;margin:107px 0 0 3px;padding:102px 0 0 172px}
.bins{width:346px;display:flex;flex-direction:column;margin-left:1px}
.bins .search{margin-right:7px;margin-left:3px}
.bins .vscroll{margin-right:3px}
.bins .phead{letter-spacing:-.4px}
.binlist{flex:1;width:301px;border-right:1px solid #3e3e3e}
.binlist div{height:23px;display:flex;align-items:center;padding-left:6px;font-size:12px;letter-spacing:0}
.binlist svg{margin-right:13px}
.redact{width:62px;height:13px;background:#505050;filter:blur(5px)}
.bottom{flex:1;display:flex;min-height:0}
.work{width:1631px;display:flex;flex-direction:column}
.ngbar{height:28px;flex:none;display:flex;align-items:center;padding:0 0 4px 4px;background:#2e2e2e}
.ngbar .down{margin-right:12px;margin-left:1px}
.nglabel{width:138px;height:20px;background:#171c1d;text-align:center;line-height:21px;font-size:12.500px;margin-left:1px}
.undo{font:700 8px/9.500px "Open Sans",sans-serif;color:#0a0a0a;text-align:center}
.sn{color:#b4dde8;font-size:14px;line-height:19px;text-align:center}
.ngright{margin-left:842px;display:flex;gap:1px}
.red{background:#4b3d3f}
.transport{margin-left:87px;display:flex}
.transport .btn{width:30.300px!important}
.transport .w38{width:38px!important}
.stage{height:458px;flex:none;display:flex;padding-left:3px}
.tabs{margin-right:-2px}
.tabs text{font-size:12px;text-anchor:middle;letter-spacing:-.3px}
.graphcol{width:1595px}
.g1{font-size:15px;letter-spacing:.05px;fill:#c8c8c8}.g2{font-size:12.500px;letter-spacing:.02px;fill:#c0c0c0}
.n1,.n2{font-size:10.500px;fill:#080808}
.n1{letter-spacing:-.35px}
.hscroll,.tscroll{height:11px;background:#222}
.hscroll i{display:block;height:9px;background:#383838;margin-left:210px}
.vscroll.gs{margin:0 0 0 3px;width:10px;border:0;padding-top:175px}
.gs i{height:170px}
.timebar{flex:1;background:#2f2f2f;display:flex;align-items:flex-start}
.tools{width:489px;flex:none;display:flex;gap:2px;padding-top:11px;padding-left:1px}
.tools span{width:33.300px;height:23px;background:#3d3f40;border:1px solid;border-color:#555 #555 #222 #444;display:flex;align-items:center;justify-content:center;font-size:10px;font-weight:600;color:#0a0a0a;clip-path:polygon(7px 0,100% 0,100% 100%,0 100%,0 7px)}
.tools .lit{color:#b4ccd2;background:#3f474a}
.clock{width:113px;flex:none;height:47px;padding-right:1px}
.clock>span{display:block;text-align:right;padding-right:4px;font-size:9.500px;line-height:11px;color:#999}
.clock div{display:flex;height:24px}
.clock b{width:23px;height:22px;margin-top:1px;background:#424445;color:#0a0a0a;font-size:10px;line-height:22px;text-align:center;clip-path:polygon(6px 0,100% 0,100% 100%,6px 100%,0 75%,0 25%)}
.clock em{flex:1;background:#000;color:#ddd;font:16px/24px "Open Sans",sans-serif;letter-spacing:-.3px;text-align:center}
.tl{padding-top:1px;width:1029px;flex:none}
.tlt text{font-size:9px;letter-spacing:-.4px;text-anchor:middle;fill:#999;transform:translateY(1006px)}
.tscroll i{display:block;width:318px;height:9px;margin-left:41px;background:#333;border:1px solid #454545;border-width:1px 3px}
.nodes{flex:1;display:flex;flex-direction:column;padding-left:7px}
.layer{height:27px;flex:none;background:#2e2e2e;display:flex;align-items:center;justify-content:flex-end;padding-right:14px;font-size:10px;letter-spacing:-.2px}
.layer i{width:16px;height:12px;background:#050505;clip-path:polygon(0 0,100% 0,0 100%);margin-right:6px}
.ntabs text{font-size:12px}
.nodes .search{margin:6px 8px 6px 2px}
.nodes .vscroll{margin-right:2px;margin-top:4px}
.nodes .vscroll i{height:378px}
ul{list-style:none}
li{height:23px;line-height:23px;padding-left:35px;font-size:12.500px;display:flex;align-items:center;letter-spacing:-.15px}
li svg{width:7px;height:6px;margin:0 21px 0 -28px}
.status{height:18px;flex:none;background:#333;display:flex;border-top:1px solid #222;color:#aaa;letter-spacing:-.24px}
.status span{border-left:1px solid #222;padding-left:2px;line-height:17px;overflow:hidden}
.s1{width:236px}.s2{width:139px}.s3{width:127px}.s4{width:40px}.s5{width:56px}.s6{width:84px}.s7{width:83px}.s8{width:130px}.s9{width:174px}.s10{width:280px}.s11{width:107px}.s12{width:269px}.s13{width:180px}
.s9,.s12{letter-spacing:-.42px}.s13{letter-spacing:-.32px}
.taskbar{height:30px;margin:0 -2px;background:#983313;display:flex;color:#fff}
.t{width:37.200px;display:flex;align-items:center;justify-content:center;border-bottom:3px solid transparent;background-clip:padding-box}
.open{border-image:linear-gradient(90deg,transparent 5px,#e3ad93 5px 32px,transparent 32px) 3}
.active{background:#bf4520;border-bottom-color:#e3ad93}
.tray{margin-left:auto;display:flex;align-items:center}
.tray text{font:700 11px "Open Sans",sans-serif;letter-spacing:-.5px}
.tray span{margin:0 21px 0 10px}
.notif{margin-right:24px}
.caption{position:absolute;left:774px;top:301px;font:700 34px/40px "Liberation Sans",Arial,sans-serif;letter-spacing:.1px;color:#fff;-webkit-text-stroke:5px #ee3338;paint-order:stroke fill}
.dialog{position:absolute;left:728px;top:364px;width:465px;height:316px;background:#2d2d2d;box-shadow:0 2px 8px rgba(0,0,0,.5)}
.dtitle{height:30px;background:#fff;color:#111;display:flex;align-items:center;justify-content:space-between;padding:0 9px 0 8px}
.dbody{padding:9px 13px 0 9px}
.item{margin-top:14px;width:441px;height:16px;line-height:14px;border:1px dotted #ccc;padding-left:1px;letter-spacing:-.14px}
.path{display:flex;margin-top:149px}
.path span{width:71px;letter-spacing:-.3px;padding-top:1px}
.dfield{width:331px;height:26px;border:1px solid #383838;margin:1px 9px 0 0}
.browse{width:30px;height:30px;border:4px solid #ee3338;border-radius:4px;text-align:center;line-height:18px}
.ok{width:74px;height:24px;background:#373737;border:1px solid #424242;text-align:center;line-height:22px;font-weight:600;margin:19px 0 0 369px}
.cursor{position:absolute;left:1163px;top:612px}
.spy{position:absolute;left:339px;top:415px;width:340px;height:565px;background:#f0f0f0;color:#111;font:11px/13px "Liberation Sans",Arial,sans-serif;letter-spacing:-.03px;box-shadow:0 2px 8px rgba(0,0,0,.5)}
.stitle{height:30px;background:#fff;display:flex;align-items:center;padding:0 16px 0 8px;font:12px/16px "Open Sans",sans-serif;color:#999;letter-spacing:-.3px}
.stitle span{margin-left:5px;flex:1}
.sbody{padding:0 10px}
.lab{height:25px;padding-top:7px}
.lab.first{display:flex;justify-content:space-between;letter-spacing:-.03px}
.lab span{display:flex;letter-spacing:-.3px}
.lab i,.slow i{width:13px;height:13px;border:1px solid #333;background:#fff;margin:-1px 0 0 4px}
.box{position:relative;border:1px solid #7a7a7a;padding:3px 2px 0;overflow:hidden}
.h60{height:60px}.h34{height:34px}
.box p{height:13px;display:flex}
.box u{text-decoration:none;width:48px;letter-spacing:-.03px}
.box u.cn{letter-spacing:-.3px}
.tight{letter-spacing:-.17px}.tighter{letter-spacing:-.38px}
.arr{position:absolute;right:2px;top:1px;bottom:1px;width:17px;border-left:1px solid #fff;color:#b9b9b9}
.arr::before,.arr::after{content:"";position:absolute;left:5px;width:5px;height:5px;border:solid;border-width:2px 0 0 2px;transform:rotate(45deg)}
.arr::before{top:8px}.arr::after{bottom:7px;transform:rotate(225deg)}
.dk{color:#444}
.slow{display:flex;height:20px;padding-top:7px;letter-spacing:-.1px}
.slow i{margin:-1px 3px 0 0}
.vis{height:24px;padding-top:6px}
.hold{letter-spacing:-.25px}
.mark{position:absolute;border:4px solid #e8383d;border-radius:4px}
.k1{left:5px;top:54px;width:108px;height:22px}
.k2{left:8px;top:151px;width:142px;height:24px}
```
